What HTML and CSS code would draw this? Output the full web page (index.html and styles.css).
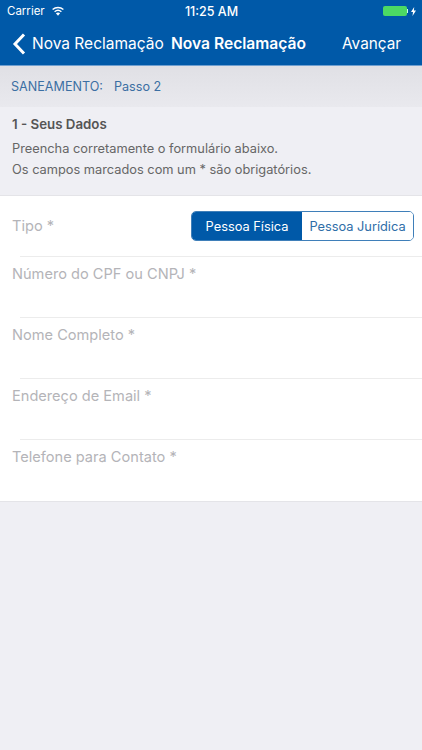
FILE: index.html
```html
<!DOCTYPE html>
<html lang="pt">
<head>
<meta charset="utf-8">
<title>Nova Reclamação</title>
<link rel="stylesheet" href="styles.css">
</head>
<body>
<div class="app">
  <header class="header">
    <div class="status">
      <div class="status-left">
        <span>Carrier</span>
        <svg class="wifi" width="14" height="10" viewBox="0 0 14 10"><path d="M7 9.8 4.9 7.3a3.2 3.2 0 0 1 4.2 0Z" fill="#fff"/><path d="M3.6 5.8a5.2 5.2 0 0 1 6.8 0" fill="none" stroke="#fff" stroke-width="1.4"/><path d="M1.6 3.5a8.2 8.2 0 0 1 10.8 0" fill="none" stroke="#fff" stroke-width="1.4"/></svg>
      </div>
      <div class="clock">11:25 AM</div>
      <div class="status-right">
        <span class="battery"></span><span class="battery-tip"></span>
        <svg width="5" height="9" viewBox="0 0 5 9"><path d="M3.2 0 0 5h2L1.5 9 5 3.6H2.9Z" fill="#fff"/></svg>
      </div>
    </div>
    <nav class="nav">
      <div class="back">
        <svg width="14" height="22" viewBox="0 0 14 22"><path d="M12 1.5 3 11l9 9.5" fill="none" stroke="#fff" stroke-width="3"/></svg>
        <span>Nova Reclamação</span>
      </div>
      <div class="title">Nova Reclamação</div>
      <div class="next">Avançar</div>
    </nav>
  </header>
  <div class="step"><span>SANEAMENTO:</span><span>Passo 2</span></div>
  <section class="intro">
    <h1>1 - Seus Dados</h1>
    <p>Preencha corretamente o formulário abaixo.</p>
    <p>Os campos marcados com um * são obrigatórios.</p>
  </section>
  <form class="form">
    <div class="row row-type">
      <span class="label">Tipo *</span>
      <div class="segment">
        <span class="seg seg-on">Pessoa Física</span>
        <span class="seg seg-off">Pessoa Jurídica</span>
      </div>
    </div>
    <div class="row"><span class="label">Número do CPF ou CNPJ *</span></div>
    <div class="row"><span class="label">Nome Completo *</span></div>
    <div class="row"><span class="label">Endereço de Email *</span></div>
    <div class="row"><span class="label">Telefone para Contato *</span></div>
  </form>
</div>
</body>
</html>
```
FILE: styles.css
```css
* { box-sizing: border-box; }
html, body { margin: 0; padding: 0; }
body {
  width: 422px;
  height: 750px;
  overflow: hidden;
  background: #efeff4;
  font-family: Inter, "Liberation Sans", sans-serif;
}
.app { display: flex; flex-direction: column; }
.header { height: 66px; background: #0059a8; color: #fff; border-bottom: 1px solid #6f9fd0; }
.status {
  height: 22px;
  padding: 0 6px 0 7px;
  display: grid;
  grid-template-columns: 1fr auto 1fr;
  align-items: center;
  font-size: 11.5px;
}
.status-left { display: flex; align-items: center; gap: 6px; }
.clock { font-weight: 500; font-size: 12.5px; }
.status-right { display: flex; align-items: center; justify-content: flex-end; }
.battery { width: 24px; height: 10px; border-radius: 2px; background: #4cd964; }
.battery-tip { width: 1.5px; height: 4px; background: #cfe; margin-right: 3px; }
.nav { height: 43px; display: flex; align-items: center; padding: 0 21px 0 12px; font-size: 15.5px; }
.back { display: flex; align-items: center; gap: 6px; width: 159px; white-space: nowrap; }
.title { font-weight: 600; font-size: 15.6px; white-space: nowrap; }
.next { margin-left: auto; font-size: 15.3px; }
.step {
  height: 41px;
  background: linear-gradient(#e0e0e5, #e9e9ee);
  display: flex;
  align-items: center;
  gap: 11px;
  padding-left: 11px;
  font-size: 12.6px;
  color: #3b6fa3;
}
.intro { height: 89px; padding: 9px 12px 0; color: #666; font-size: 12.8px; border-bottom: 1px solid #e4e4e8; }
.intro h1 { margin: 0 0 7px; font-size: 13.3px; font-weight: 600; line-height: 17px; color: #555; }
.intro p { margin: 0 0 4px; line-height: 17px; }
.form { background: #fff; border-bottom: 1px solid #e4e4e8; padding-left: 20px; }
.row { height: 61px; border-bottom: 1px solid #ececec; padding-top: 8px; }
.row:last-child { border-bottom: 0; }
.row-type { display: flex; align-items: center; justify-content: space-between; padding: 0 8px 0 0; }
.label { display: block; margin-left: -8px; font-size: 14.6px; line-height: 19px; color: #b4b4b8; }
.segment { display: flex; width: 223px; height: 30px; border: 1px solid #3f7fb9; border-radius: 5px; overflow: hidden; font-size: 12.8px; }
.seg { display: flex; align-items: center; justify-content: center; }
.seg-on { width: 110px; background: #0059a8; color: #fff; }
.seg-off { flex: 1; background: #fff; color: #2f6ea8; }
```
